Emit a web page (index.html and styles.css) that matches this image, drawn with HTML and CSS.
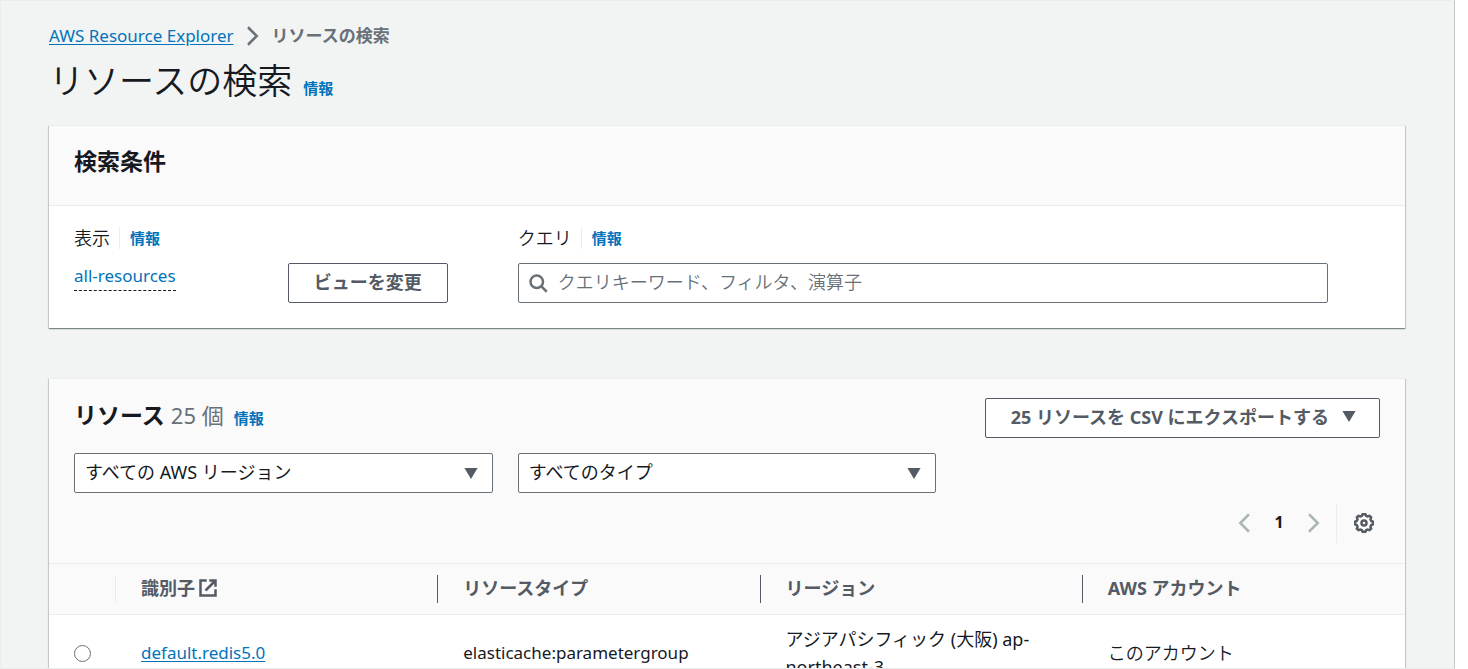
FILE: index.html
```html
<!DOCTYPE html>
<html lang="ja">
<head>
<meta charset="utf-8">
<title>リソースの検索</title>
<link rel="stylesheet" href="styles.css">
</head>
<body>
<main class="pane">
  <nav class="breadcrumb" aria-label="breadcrumb">
    <a class="link" href="#">AWS Resource Explorer</a>
    <svg class="icon crumb-arrow" viewBox="0 0 16 16"><path d="M4 1l7 7-7 7"/></svg>
    <span class="crumb-current">リソースの検索</span>
  </nav>
  <header class="title-row">
    <h1 class="title">リソースの検索</h1>
    <a class="info" href="#">情報</a>
  </header>

  <section class="card">
    <div class="card-head"><h2 class="heading">検索条件</h2></div>
    <div class="criteria">
      <div class="view">
        <div class="field-label"><span>表示</span><a class="info divided" href="#">情報</a></div>
        <div class="view-row">
          <a class="view-name" href="#">all-resources</a>
          <button class="button" type="button">ビューを変更</button>
        </div>
      </div>
      <div class="query">
        <div class="field-label"><label for="query">クエリ</label><a class="info divided" href="#">情報</a></div>
        <div class="search">
          <svg class="icon search-icon" viewBox="0 0 16 16"><circle cx="7" cy="7" r="5"/><path d="M15 15l-4.500-4.500"/></svg>
          <input class="search-input" id="query" type="text" placeholder="クエリキーワード、フィルタ、演算子">
        </div>
      </div>
    </div>
  </section>

  <section class="card">
    <div class="results-head">
      <div class="results-top">
        <div class="results-title">
          <h2 class="heading">リソース <span class="count">25 個</span></h2>
          <a class="info" href="#">情報</a>
        </div>
        <button class="button export" type="button">25 リソースを CSV にエクスポートする
          <svg class="caret" viewBox="0 0 12 10"><path d="M0 0h12L6 10z"/></svg></button>
      </div>
      <div class="filters">
        <div class="select-wrap">
          <select class="select" aria-label="リージョン"><option>すべての AWS リージョン</option></select>
          <svg class="caret select-caret" viewBox="0 0 12 10"><path d="M0 0h12L6 10z"/></svg>
        </div>
        <div class="select-wrap">
          <select class="select" aria-label="タイプ"><option>すべてのタイプ</option></select>
          <svg class="caret select-caret" viewBox="0 0 12 10"><path d="M0 0h12L6 10z"/></svg>
        </div>
      </div>
      <div class="pager">
        <button class="icon-button page-arrow" type="button" aria-label="前へ"><svg class="icon" viewBox="0 0 16 16"><path d="M12 1L5 8l7 7"/></svg></button>
        <button class="icon-button page-number" type="button">1</button>
        <button class="icon-button page-arrow" type="button" aria-label="次へ"><svg class="icon" viewBox="0 0 16 16"><path d="M4 1l7 7-7 7"/></svg></button>
        <span class="settings"><button class="icon-button" type="button" aria-label="設定"><svg class="icon" viewBox="0 0 16 16"><path d="M15 9.100V6.900l-1.300-.6-.5-1.200.5-1.600L12.400 2.300l-1.600.5-1.100-.5L9.100 1H6.900l-.6 1.300-1.200.5-1.600-.5-1.200 1.200.5 1.600-.5 1.200L1 6.900v2.200l1.300.6.5 1.200-.5 1.600 1.200 1.200 1.600-.5 1.200.5.6 1.300h2.200l.6-1.300 1.100-.5 1.600.5 1.300-1.200-.5-1.600.5-1.200z"/><circle cx="8" cy="8" r="2"/></svg></button></span>
      </div>
    </div>
    <table class="table">
      <colgroup><col class="col-select"><col><col><col><col></colgroup>
      <thead>
        <tr>
          <td class="th"><div class="th-in soft"></div></td>
          <th class="th"><div class="th-in">識別子 <svg class="icon external" viewBox="0 0 16 16"><path d="M9 2h5v5M6 10l8-8M14 9v5H2V2h5"/></svg></div></th>
          <th class="th"><div class="th-in">リソースタイプ</div></th>
          <th class="th"><div class="th-in">リージョン</div></th>
          <th class="th"><div class="th-in last">AWS アカウント</div></th>
        </tr>
      </thead>
      <tbody>
        <tr>
          <td class="td"><input class="radio" type="radio" name="resource" aria-label="default.redis5.0"></td>
          <td class="td"><a class="link" href="#">default.redis5.0</a></td>
          <td class="td">elasticache:parametergroup</td>
          <td class="td region">アジアパシフィック (大阪) ap-northeast-3</td>
          <td class="td account">このアカウント</td>
        </tr>
      </tbody>
    </table>
  </section>
</main>
</body>
</html>
```
FILE: styles.css
```css
* { box-sizing: border-box; }

body {
  margin: 0;
  background: #fff;
  color: #16191f;
  font: 400 17px/28px "Noto Sans", "Noto Sans CJK JP", sans-serif;
}

button, input, select { font: inherit; color: inherit; }
h1, h2 { margin: 0; }

.pane {
  height: 100vh;
  margin-right: 13px;
  padding: 21px 49px 0 48px;
  overflow: hidden;
  background: #f2f3f3;
  border: 1px solid #eaeded;
  border-right-color: #c3c8c9;
}

.link { color: #0073bb; text-decoration: underline; text-underline-offset: 2px; }
.info { color: #0073bb; font-size: 15px; font-weight: 700; line-height: 22px; text-decoration: none; }

.icon { width: 20px; height: 20px; fill: none; stroke: currentColor; stroke-width: 2; display: block; flex: none; }
.caret { width: 14px; height: 11px; fill: #545b64; }

.breadcrumb { display: flex; align-items: center; gap: 9px; }
.crumb-arrow { color: #687078; }
.crumb-current { color: #687078; font-weight: 700; }

.title-row { display: flex; align-items: baseline; gap: 11px; margin-bottom: 13px; }
.title { font-size: 35px; font-weight: 350; line-height: 62px; }

.card {
  margin-bottom: 50px;
  background: #fff;
  border-top: 1px solid #eaeded;
  box-shadow: 0 1px 1px rgba(0, 28, 36, .3), 1px 1px 1px rgba(0, 28, 36, .15), -1px 1px 1px rgba(0, 28, 36, .15);
}
.card-head { padding: 21px 25px 30px; background: #fafafa; border-bottom: 1px solid #eaeded; }
.heading { font-size: 23px; line-height: 28px; font-weight: 700; }
.count { color: #687078; font-size: 22px; font-weight: 400; }

.criteria { display: grid; grid-template-columns: repeat(3, 1fr); gap: 25px; padding: 18px 25px 25px; }
.view { padding-right: 45px; }
.query { grid-column: span 2; padding-right: 52px; }
.field-label { display: flex; align-items: center; gap: 9px; margin-bottom: 11px; font-size: 18px; font-weight: 350; }
.divided { padding-left: 10px; border-left: 1px solid #eaeded; }
.view-row { display: flex; justify-content: space-between; align-items: flex-start; }
.view-name { padding-bottom: 2px; color: #0073bb; line-height: 25px; text-decoration: none; border-bottom: 1px dashed #16191f; }

.button {
  height: 40px;
  padding: 0 25px 3px;
  background: #fff;
  border: 1px solid #545b64;
  border-radius: 2px;
  color: #545b64;
  font-size: 18px;
  font-weight: 700;
}
.export { display: flex; align-items: center; gap: 13px; padding-right: 23px; }

.search { position: relative; }
.search-icon { position: absolute; left: 10px; top: 10px; color: #687078; }
.search-input, .select {
  display: block;
  width: 100%;
  height: 40px;
  background: #fff;
  border: 1px solid #687078;
  border-radius: 2px;
  font-size: 18px;
}
.search-input { padding: 0 12px 2px 39px; font-weight: 350; }
.search-input::placeholder { color: #687078; opacity: 1; }

.results-head { padding: 19px 25px 20px; background: #fafafa; border-bottom: 1px solid #eaeded; }
.results-top { display: flex; justify-content: space-between; margin-bottom: 15px; }
.results-title { display: flex; align-items: baseline; gap: 10px; padding-top: 3px; }
.filters { display: grid; grid-template-columns: repeat(3, 1fr); gap: 25px; margin-bottom: 10px; }
.select-wrap { position: relative; }
.select { appearance: none; padding: 0 10px 2px; }
.select-caret { position: absolute; right: 15px; top: 15px; pointer-events: none; }

.pager { display: flex; justify-content: flex-end; align-items: center; height: 40px; }
.icon-button { display: flex; align-items: center; justify-content: center; height: 40px; padding: 0; border: 0; background: none; }
.page-arrow { color: #aab7b8; }
.page-number { width: 50px; padding-bottom: 2px; font-size: 16px; font-weight: 700; }
.settings { margin-left: 12px; padding: 0 6px 0 17px; border-left: 1px solid #eaeded; color: #545b64; }

.table { width: 100%; table-layout: fixed; border-collapse: collapse; }
.col-select { width: 67px; }
.th { padding: 11px 0; background: #fafafa; border-bottom: 1px solid #eaeded; color: #545b64; font-size: 18px; text-align: left; }
.th-in { display: flex; align-items: center; gap: 3px; height: 28px; padding: 0 0 2px 25px; border-right: 1px solid #545b64; }
.soft { border-color: #eaeded; }
.last { border: 0; }
.td { padding: 10px 25px; vertical-align: middle; }
.region { font-size: 18px; }
.account { font-size: 18px; font-weight: 350; }
.radio { appearance: none; display: block; width: 17px; height: 17px; margin: 0; border: 1px solid #687078; border-radius: 50%; background: #fff; }
```
